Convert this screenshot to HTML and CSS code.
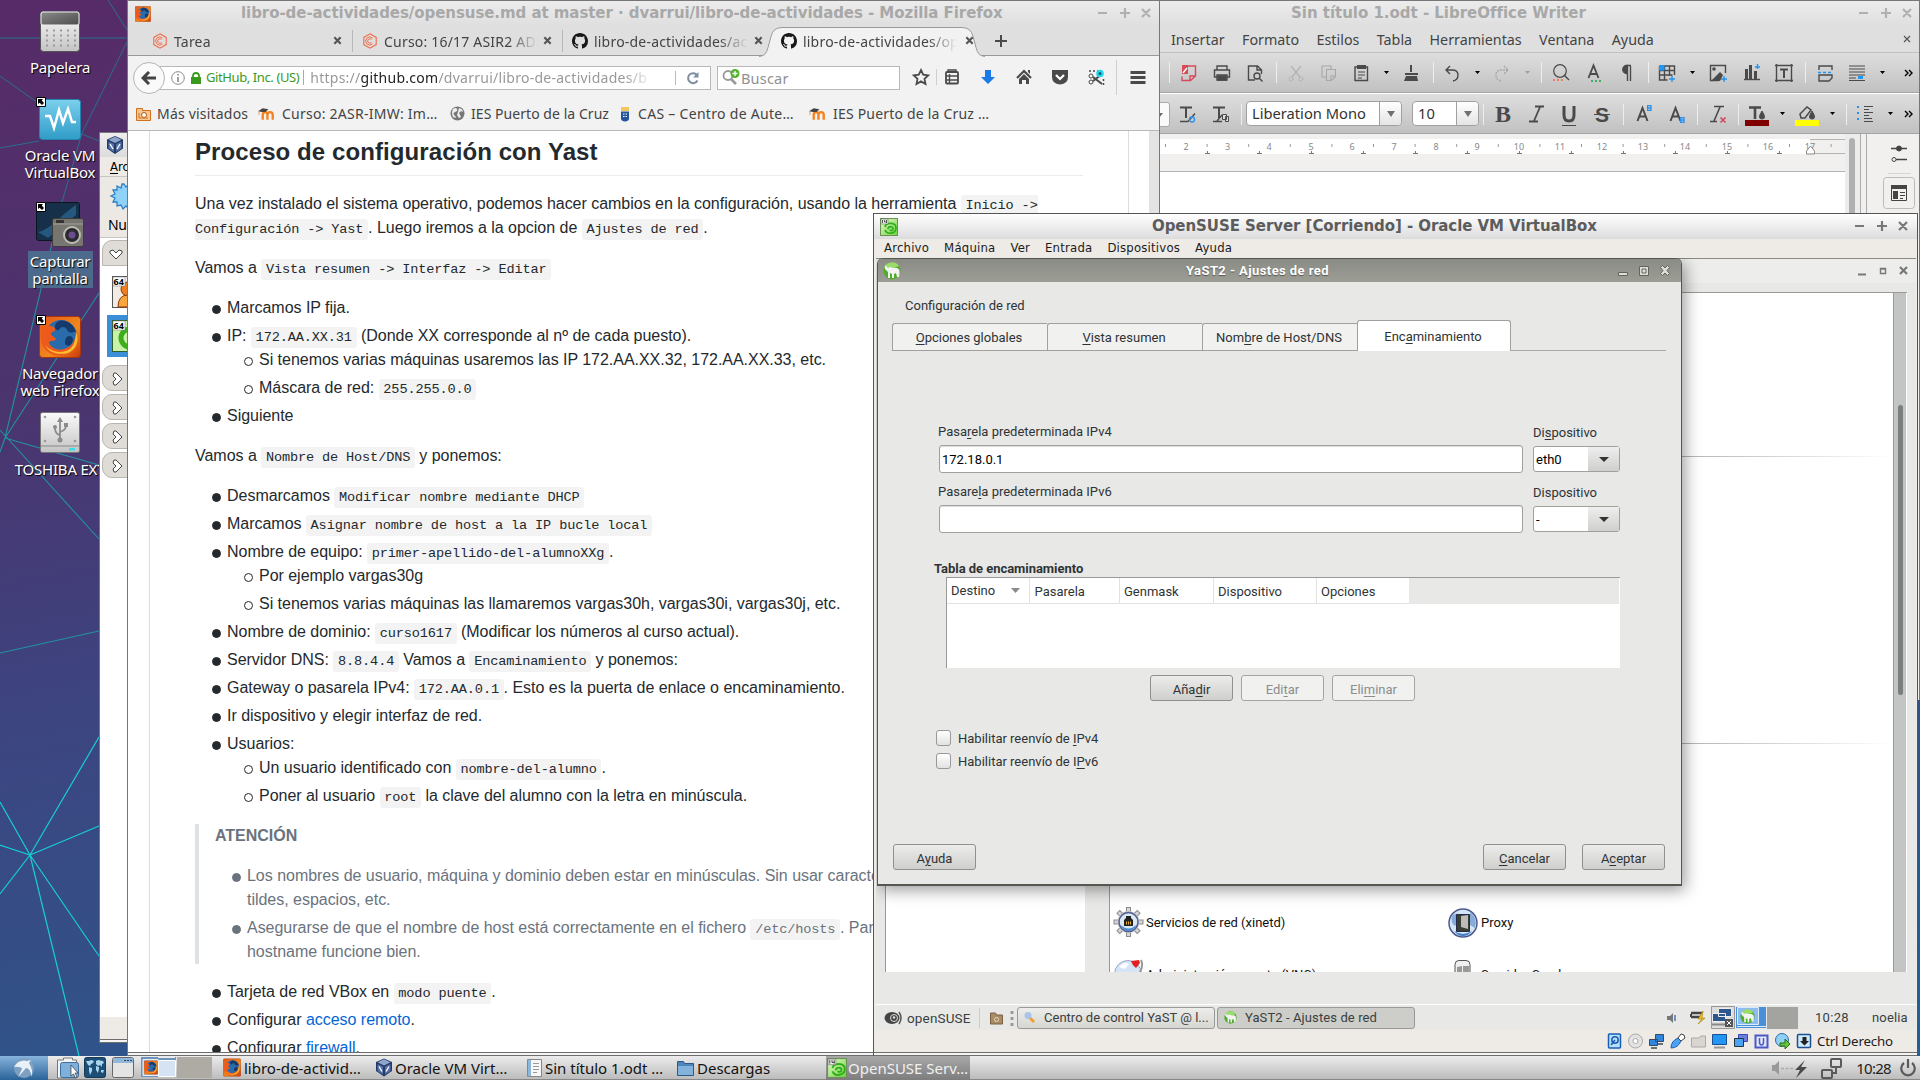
FILE: index.html
```html
<!DOCTYPE html>
<html lang="es">
<head>
<meta charset="utf-8">
<title>Escritorio</title>
<link rel="stylesheet" href="styles.css">
</head>
<body>
<svg class="defs" width="0" height="0">
  <defs>
    <linearGradient id="g-metal" x1="0" y1="0" x2="0" y2="1"><stop offset="0" stop-color="#fafafa"/><stop offset="1" stop-color="#c4c4c4"/></linearGradient>
    <linearGradient id="g-dark" x1="0" y1="0" x2="1" y2="1"><stop offset="0" stop-color="#8a8a8a"/><stop offset="1" stop-color="#4c4c4c"/></linearGradient>
    <linearGradient id="g-cyan" x1="0" y1="0" x2="0" y2="1"><stop offset="0" stop-color="#7cd0ec"/><stop offset="1" stop-color="#2f9cc8"/></linearGradient>
    <linearGradient id="g-fire" x1="0" y1="0" x2="1" y2="1"><stop offset="0" stop-color="#e2571a"/><stop offset=".6" stop-color="#f08a1c"/><stop offset="1" stop-color="#c8380c"/></linearGradient>
    <linearGradient id="g-green" x1="0" y1="0" x2="1" y2="1"><stop offset="0" stop-color="#e6fbd0"/><stop offset="1" stop-color="#6fd23c"/></linearGradient>
  </defs>
  <symbol id="i-firefox" viewBox="0 0 42 42">
    <rect x=".5" y=".5" width="41" height="41" rx="3" fill="url(#g-fire)" stroke="#a83410"/>
    <circle cx="22" cy="20" r="16" fill="#2a6cab"/>
    <path d="M20 5c8-2 15 4 17 11-3-1-4 2-7 0s-2-5-6-5-3 4-6 3-3-7 2-9zM30 20c4 0 5 3 3 7s-7 3-7 0 1-7 4-7z" fill="#173a6d"/>
    <path d="M3 10c2 2 3 1 5 0 5-1 9 2 8 4s-4 2-4 4 4 3 5 5c-2 3-5 1-7 3 1 6 9 9 15 7 8-2 12-9 12-17 5 9 1 20-11 23S3 35 2 24c-.5-6 0-10 1-14z" fill="#ee5a1c"/>
    <path d="M37 16c4 8 0 18-8 21-8 2-18 1-23-8 6 7 14 8 21 6s10-10 10-19z" fill="#fbc02d"/>
  </symbol>
  <symbol id="i-github" viewBox="0 0 16 16"><path fill="#191717" d="M8 0C3.58 0 0 3.58 0 8c0 3.54 2.29 6.53 5.47 7.59.4.07.55-.17.55-.38 0-.19-.01-.82-.01-1.49-2.01.37-2.53-.49-2.69-.94-.09-.23-.48-.94-.82-1.13-.28-.15-.68-.52-.01-.53.63-.01 1.08.58 1.23.82.72 1.21 1.87.87 2.33.66.07-.52.28-.87.51-1.07-1.78-.2-3.64-.89-3.64-3.95 0-.87.31-1.59.82-2.15-.08-.2-.36-1.02.08-2.12 0 0 .67-.21 2.2.82.64-.18 1.32-.27 2-.27s1.36.09 2 .27c1.53-1.04 2.2-.82 2.2-.82.44 1.1.16 1.92.08 2.12.51.56.82 1.27.82 2.15 0 3.07-1.87 3.75-3.65 3.95.29.25.54.73.54 1.48 0 1.07-.01 1.93-.01 2.2 0 .21.15.46.55.38A8.01 8.01 0 0 0 16 8c0-4.42-3.58-8-8-8z"/></symbol>
  <symbol id="i-campus" viewBox="0 0 16 16"><path d="M8 .8l6.2 3.6v7.2L8 15.200l-6.200-3.600V4.400z" fill="none" stroke="#ef6c4a" stroke-width="1.100"/><path d="M10.600 5.200a4 4 0 1 0 0 5.600M9.500 6.500a2.200 2.200 0 1 0 0 3" fill="none" stroke="#ef6c4a"/></symbol>
  <symbol id="i-moodle" viewBox="0 0 18 14"><path d="M3.500 13V8q0-3 2.500-3t2.500 3v5M8.500 8q0-3 2.800-3t2.800 3v5" transform="translate(1.500 0)" fill="none" stroke="#f58220" stroke-width="2.500"/><path d="M0 4l5-3 6 1-3 3H4z" fill="#444"/><path d="M1 4v4" stroke="#d9a36a"/></symbol>
  <symbol id="i-close" viewBox="0 0 10 10"><path d="M1.500 1.500l7 7M8.500 1.500l-7 7" stroke="#555" stroke-width="2.400"/></symbol>
  <symbol id="i-vbox" viewBox="0 0 16 18"><path d="M8 0l8 3.500v9L8 18l-8-5.500v-9z" fill="#243b68"/><path d="M8 .8l6.500 2.900L8 7 1.500 3.700z" fill="#8fa5cb"/><path d="M1.500 5.500L7 8v8L1.500 12.500zM14.500 5.500L9 8v8l5.500-3.500z" fill="#5672a8"/><path d="M3 8l3 5M13 8l-3 5" stroke="#fff" stroke-width="1.300"/></symbol>
  <symbol id="i-suse" viewBox="0 0 18 18"><rect x=".5" y=".5" width="17" height="17" fill="url(#g-green)" stroke="#6d8f58"/><path d="M5 9c1-5 11-5 11 1 0 6-9 7-11 2M8 11c0-3 5-3 5-.5s-3 2.500-3 1" fill="none" stroke="#2fae1c" stroke-width="1.700"/><path d="M1 1h7v5H1z" fill="#eee" stroke="#777" stroke-width=".6"/><path d="M2.500 2v3M4.500 2v2h2M6.500 2v3" stroke="#333" stroke-width=".8" fill="none"/></symbol>
  <symbol id="i-gnu" viewBox="0 0 18 18"><circle cx="9" cy="9" r="8.500" fill="#4fae28"/><path d="M1 6a8.500 8.500 0 0 1 15-2L9 7z" fill="#9bdc6c"/><path d="M2 3l3 3 2-1 3 1h4c3 1 3 4 2 9h-2l-1-4-2 1v4H9v-4l-2-1v5H5v-6L2 7z" fill="#f3f3f3"/></symbol>
  <symbol id="i-shortcut" viewBox="0 0 10 10"><path d="M.5.5h9v9h-9z" fill="#fff" stroke="#000"/><path d="M2 2h5L5.700 3.500 8 6 6 8 3.600 5.700 2 7z"/></symbol>
  <symbol id="i-geardoor" viewBox="0 0 32 32"><g stroke="#8c8c8c" stroke-width="5"><path d="M15.500 0v30M.5 15h30M5 4.500l21 21M26 4.500l-21 21"/></g><g stroke="#d6d6d6" stroke-width="3"><path d="M15.500 1v28M1.500 15h28M5.700 5.200l19.600 19.600M25.300 5.200L5.700 24.800"/></g><circle cx="15.500" cy="15" r="11" fill="#c9c9c9"/><circle cx="15.500" cy="15" r="9.500" fill="#dbe9f7" stroke="#4f5d92" stroke-width="1.500"/><path d="M7.500 18q8 7 16 0-3 6-8 6t-8-6z" fill="#4d8bd0"/></symbol>
</svg>

<main class="desktop">
  <svg class="wallpaper" viewBox="0 0 128 1056" width="128" height="1056">
    <g fill="none" stroke="#2b6f8c" stroke-width="1"><path d="M0 38H127M108 0l19 30M127 42L82 133 62 202M0 76l41 29M0 148l39-7M82 134l17 7"/></g>
    <g fill="none" stroke="#22929f" stroke-width="1.100"><path d="M99 293L5 438 62 202M5 438l94 27M0 430l99 109M5 438l-5 14M0 653l99-22"/></g>
    <g fill="none" stroke="#15cfd8" stroke-width="1.200"><path d="M30 855L99 737M30 855l69-29M30 855l69 101M30 855l49 201M30 855L0 802M30 855L0 845M30 855L0 894"/></g>
  </svg>

  <nav class="launchers">
    <div class="launcher l1">
      <svg width="48" height="50"><rect x="4.500" y="2.500" width="39" height="40" rx="3" fill="url(#g-metal)" stroke="#555"/><rect x="5" y="3" width="38" height="13" rx="2" fill="url(#g-dark)" stroke="#eee"/><g stroke="#999" stroke-width="2" stroke-dasharray="2 5"><path d="M10 21.500h30M10 26.500h30M10 31.500h30M10 36.500h30"/></g></svg>
      <span>Papelera</span>
    </div>
    <div class="launcher l2">
      <svg width="48" height="50"><rect x="3.500" y="2.500" width="41" height="40" rx="3" fill="url(#g-cyan)" stroke="#2484ae"/><path d="M9 19h5l4 12 5-18 4 13 5-14 4 13h4" fill="none" stroke="#fff" stroke-width="2.500"/><use href="#i-shortcut" width="10" height="10"/></svg>
      <span>Oracle VM</span><span>VirtualBox</span>
    </div>
    <div class="launcher l3">
      <svg width="48" height="50"><rect x=".5" y=".5" width="43" height="38" rx="2" fill="#16304a" stroke="#0b1622"/><path d="M2 30C14 28 26 12 40 3v10L12 36z" fill="#24587f"/><rect x="16.500" y="16.500" width="31" height="28" rx="2" fill="#77756f" stroke="#3c3b38"/><path d="M17 22h30" stroke="#a5a39c"/><circle cx="36" cy="33" r="9" fill="#bdbbb4"/><circle cx="36" cy="33" r="7" fill="#2a2a2e"/><circle cx="36" cy="33" r="3.500" fill="#6b4c8e"/><rect x="20" y="18" width="8" height="3" fill="#333"/><use href="#i-shortcut" width="10" height="10"/></svg>
      <div class="picked"><span>Capturar</span><span>pantalla</span></div>
    </div>
    <div class="launcher l4">
      <svg width="48" height="50"><use href="#i-firefox" x="3" y="1" width="42" height="42"/><use href="#i-shortcut" width="10" height="10"/></svg>
      <span>Navegador</span><span>web Firefox</span>
    </div>
    <div class="launcher l5">
      <svg width="48" height="50"><rect x="4.500" y="1.500" width="39" height="40" rx="2" fill="url(#g-metal)" stroke="#777"/><path d="M5 35h38" stroke="#888"/><rect x="33" y="37" width="6" height="2.500" fill="#38e0ea"/><g fill="none" stroke="#8b8b8b" stroke-width="1.800"><path d="M24 9v20M24 24q-5-1-5-7M24 21q6-2 6-6"/></g><g fill="#8b8b8b"><path d="M24 6l3 5h-6z"/><circle cx="24" cy="29" r="2.500"/><circle cx="19" cy="16" r="2"/><path d="M28 12h4v4h-4z"/></g><g fill="#999"><circle cx="9" cy="6" r="1.300"/><circle cx="39" cy="6" r="1.300"/><circle cx="9" cy="30" r="1.300"/><circle cx="39" cy="30" r="1.300"/></g></svg>
      <span>TOSHIBA EXT</span>
    </div>
  </nav>

  <section class="win manager">
    <div class="mg-title"><svg width="16" height="18"><use href="#i-vbox" width="16" height="18"/></svg></div>
    <div class="mg-menu"><u>A</u>rchivo</div>
    <div class="mg-tool">
      <svg width="32" height="32"><path d="M16 2l2 3 3-3 1 4 4-2v4l4 0-2 4 4 2-4 2 3 4h-4l0 4-4-1-2 4-3-3-3 3-2-4-4 1v-4H5l2-4-4-2 4-2-2-4h4V4l4 2 1-4z" fill="#8fd3fa" stroke="#2f7fc4" stroke-width="1.300"/></svg>
      <span>Nueva</span>
    </div>
    <div class="mg-list">
      <div class="mg-head open"><svg width="16" height="12"><path d="M2 3l3-1 3 3 3-3 3 1v2L8 11 2 5z" fill="#fff" stroke="#444"/></svg></div>
      <div class="mg-vm"><svg width="32" height="32"><rect x=".5" y=".5" width="31" height="31" fill="#f2ece4" stroke="#555"/><circle cx="16" cy="13" r="7" fill="#ef7d22" stroke="#8d3b06"/><path d="M6 31q0-12 10-12t10 12z" fill="#f9a63f" stroke="#8d3b06"/><rect x="1" y="1" width="12" height="9" fill="#fff" stroke="#777" stroke-width=".5"/><text x="1.500" y="9" class="tag64">64</text></svg></div>
      <div class="mg-vm on"><svg width="32" height="32"><rect x=".5" y=".5" width="31" height="31" fill="#c9f2a8" stroke="#2b5f2b"/><circle cx="18" cy="18" r="9" fill="none" stroke="#3fae1c" stroke-width="5"/><rect x="1" y="1" width="12" height="9" fill="#fff" stroke="#777" stroke-width=".5"/><text x="1.500" y="9" class="tag64">64</text></svg></div>
      <div class="mg-head"><svg width="12" height="16"><path d="M3 2h2l6 6-6 6H3l-1-3 3-3-3-3z" fill="#fff" stroke="#444"/></svg></div>
      <div class="mg-head"><svg width="12" height="16"><path d="M3 2h2l6 6-6 6H3l-1-3 3-3-3-3z" fill="#fff" stroke="#444"/></svg></div>
      <div class="mg-head"><svg width="12" height="16"><path d="M3 2h2l6 6-6 6H3l-1-3 3-3-3-3z" fill="#fff" stroke="#444"/></svg></div>
      <div class="mg-head"><svg width="12" height="16"><path d="M3 2h2l6 6-6 6H3l-1-3 3-3-3-3z" fill="#fff" stroke="#444"/></svg></div>
    </div>
    <div class="mg-status"></div>
    <div class="frame-foot"></div>
  </section>

  <section class="win writer">
    <header class="lo-title">
      <span class="lo-name">Sin título 1.odt - LibreOffice Writer</span>
      <svg width="54" height="12"><path d="M0 6h9M22 6h10M27 1v10M44 2l8 8M52 2l-8 8" stroke="#b0b0b0" stroke-width="2.200"/></svg>
    </header>
    <nav class="lo-menu"><span>Insertar</span><span>Formato</span><span>Estilos</span><span>Tabla</span><span>Herramientas</span><span>Ventana</span><span>Ayuda</span>
      <svg width="8" height="8"><path d="M1 1l6 6M7 1L1 7" stroke="#555" stroke-width="1.200"/></svg></nav>
    <div class="lo-bar">
      <svg viewBox="1159 53 760 40" width="760" height="40" fill="none" stroke="#4a4a4a" stroke-width="1.400">
        <g stroke="#eee" stroke-width="1"><path d="M1169.500 62v21M1276.500 62v21M1433.500 62v21M1541.500 62v21M1648.500 62v21M1805.500 62v21"/></g>
        <g stroke="#d84a5a"><path d="M1188 66h7.500v10l-5 4.500H1182v-4M1195 76h-5v5"/><path d="M1182 65h6v9h-6z" fill="#d84a5a" stroke="none"/><path d="M1183 73l4-5" stroke="#fff"/></g>
        <path d="M1217 70v-4h10v4M1217 77h-2.500v-7h15v7h-2.500M1217 75h10v5h-10z"/><path d="M1218 76h8v4h-8z" fill="#4a4a4a"/>
        <path d="M1255 80h-6.500V66h9l4 4v4M1257 66v4h4"/><circle cx="1257" cy="76" r="3"/><path d="M1259 78l3.500 3.500"/>
        <g stroke="#a8a8a8" stroke-width="1.100"><path d="M1291 66l9 11M1301 66l-9 11"/><circle cx="1291" cy="79" r="2" stroke-dasharray="1 1"/><circle cx="1301" cy="79" r="2" stroke-dasharray="1 1"/><path d="M1326 77h-4V66h9v3M1326.500 69.500h9v7l-4 4h-5zM1335 76h-4v4"/></g>
        <path d="M1355 67h12.500v13.500H1355z"/><path d="M1357 65h9v4h-9z" fill="#4a4a4a" stroke="none"/><path d="M1358 72h7M1358 75h7M1358 78h4" stroke-width="1"/>
        <path d="M1384 71h5l-2.500 3zM1475 71h5l-2.500 3zM1690 71h5l-2.500 3zM1880 71h5l-2.500 3z" fill="#000" stroke="none"/><path d="M1525 71h5l-2.500 3z" fill="#a0a0a0" stroke="none"/>
        <path d="M1411 65v7M1405 74h13" stroke-width="2"/><path d="M1406 76h11l1 5h-14z" fill="#4a4a4a" stroke="none"/>
        <path d="M1450 66l-4 4 4 4M1446 70h6q6 0 6 5t-5 6"/>
        <path d="M1504 66l4 4-4 4M1508 70h-6q-6 0-6 5t5 6" stroke="#a8a8a8" stroke-dasharray="2 1"/>
        <circle cx="1560" cy="71" r="6.300" stroke-width="1.200"/><path d="M1564 75l5 5"/><path d="M1553 80h11" stroke="#ef7f5a" stroke-width="2" stroke-dasharray="2 2"/>
        <path d="M1588.500 78l5-12.500 5 12.500M1590.500 74h6" stroke-width="1.800"/><path d="M1591 81h11" stroke="#3fae68" stroke-width="2" stroke-dasharray="2 2"/>
        <path d="M1631 65.500h-4a3.500 3.500 0 0 0 0 8V66M1627.500 66v15M1630.500 66v15"/><path d="M1627 65.500a4 4 0 0 0 0 8z" fill="#4a4a4a"/>
        <path d="M1659.500 66h15v9M1659.500 66v14h8M1659.500 70.500h15M1659.500 75h13M1664.500 66v14M1669.500 66v10"/><path d="M1659 65h5.500v5.500h-5.500z" fill="#2196f3" stroke="none"/><path d="M1669 79h6M1672 76v6" stroke="#2196f3"/>
        <path d="M1725.500 73v-7.500h-15v15h8"/><path d="M1711 81l9-9 3 3-3 6z" fill="#4a4a4a" stroke="none"/><circle cx="1714" cy="69" r="1.800" fill="#4a4a4a" stroke="none"/><path d="M1721 79h6M1724 76v6" stroke="#2196f3"/>
        <path d="M1744 79.500h16"/><path d="M1746.500 69v10M1750.500 65v14M1755.500 71v8" stroke-width="3"/><path d="M1755 67h5M1757.500 64v5" stroke="#2196f3"/>
        <path d="M1776.500 64v18M1791.500 64v18M1775 65.500h18M1775 80.500h18"/><path d="M1780 69.500h8M1784 69v9" stroke-width="2"/>
        <path d="M1819 70v-4h13v4M1819 75h13v3l-3 3h-10z"/><path d="M1818 72.500h14" stroke="#2196f3" stroke-dasharray="3 2"/>
        <path d="M1849 66h16M1849 69h16M1849 72h16M1849 75h16M1849 78h7M1849 80.500h16" stroke-width="1.100"/><path d="M1858 76h5v3h-5z" fill="#2196f3" stroke="none"/>
        <path d="M1905 70l3 3-3 3M1909 70l3 3-3 3" stroke="#000"/>
      </svg>
    </div>
    <div class="lo-bar second">
      <svg viewBox="1159 94 87 39" width="87" height="39" fill="none" stroke="#4a4a4a">
        <path d="M1159 102.500h8q2.500 0 2.500 2.500v19q0 2.500-2.500 2.500h-8z" fill="#fafafa" stroke="#a9a9a9"/><path d="M1159 113h4l-4 5z" fill="#666" stroke="none"/>
        <path d="M1180 107.500h12M1186 107v11" stroke-width="2"/><path d="M1180 121.500h8l7-8" stroke-width="1.400"/><circle cx="1192" cy="119.500" r="2.500" stroke="#2b90e8" stroke-width="1.300"/>
        <path d="M1213 107.500h12M1219 107v11" stroke-width="2"/><path d="M1213 121.500h9M1217 121l5-6" stroke-width="1.400"/><path d="M1222.500 114.500h4v5h-4zM1225.500 116.500h3v5h-3z" fill="#ddd"/>
        <path d="M1241.500 104v21" stroke="#eee"/>
      </svg>
      <div class="combo font"><span>Liberation Mono</span><i><svg width="8" height="6"><path d="M0 0h8L4 6z" fill="#707070"/></svg></i></div>
      <div class="combo size"><span>10</span><i><svg width="8" height="6"><path d="M0 0h8L4 6z" fill="#707070"/></svg></i></div>
      <svg viewBox="1479 94 440 39" width="440" height="39" fill="none" stroke="#4a4a4a">
        <g stroke="#eee"><path d="M1483.500 104v21M1623.500 104v21M1697.500 104v21M1738.500 104v21M1846.500 104v21"/></g>
        <g fill="#4a4a4a" stroke="none"><text x="1495" y="122" class="fmt bold">B</text><text x="1595" y="122" class="fmt sans">S</text></g>
        <path d="M1535 106.500h9M1529 121.500h9M1540 107l-6 14" stroke-width="1.800"/>
        <path d="M1564 106v9q0 6 5 6t5-6v-9" stroke-width="3"/><path d="M1562 125.500h14M1594 114.500h16" stroke-width="1.200"/>
        <path d="M1637.500 121l5-13 5 13M1639.500 116.500h6M1670.500 121l5-13 5 13M1672.500 116.500h6" stroke-width="2"/>
        <g stroke="#2b90e8" stroke-width="1.300"><path d="M1647.600 105.600h3.400v4.800h-3.400zM1648 108h3M1680.600 117.600h3.400v4.800h-3.400zM1681 120h3"/></g>
        <path d="M1714 106.500h10M1710 121.500h7M1720 107l-6 14" stroke-width="1.600"/><path d="M1720.500 117.500l5 5M1725.500 117.500l-5 5" stroke="#d84a5a" stroke-width="1.700"/>
        <path d="M1749 107.500h12M1755 107v12" stroke-width="2.600"/><path d="M1762 111q5 8 0 8t0-8z" fill="#4a4a4a" stroke="#4a4a4a"/><path fill="#800000" stroke="none" d="M1745 120h24v6h-24z"/>
        <path d="M1800 114l7-7 4 3-6 8h-4z" stroke-width="1.500"/><path d="M1812 111q5 8 0 8t0-8z" fill="#4a4a4a"/><path fill="#ff0" stroke="none" d="M1795 120h24v6h-24z"/>
        <path d="M1780 112h5l-2.500 3zM1830 112h5l-2.500 3zM1888 112h5l-2.500 3z" fill="#000" stroke="none"/>
        <path d="M1858 106v16" stroke="#2b90e8" stroke-width="2" stroke-dasharray="2 4"/><path d="M1864 106.500h9M1864 109.500h5M1864 112.500h9M1864 115.500h5M1864 118.500h8M1864 121.500h9" stroke-width="1.200"/>
        <path d="M1905 111l3 3-3 3M1909 111l3 3-3 3" stroke="#000" stroke-width="1.400"/>
      </svg>
    </div>
    <div class="lo-main">
      <div class="lo-edit">
        <svg class="ruler" viewBox="1159 134 686 38" width="686" height="38">
          <defs><pattern id="half" x="1165" y="134" width="41.600" height="38" patternUnits="userSpaceOnUse"><path d="M0 10h1v3H0z" fill="#999"/></pattern>
          <pattern id="tabs" x="1205" y="134" width="52" height="38" patternUnits="userSpaceOnUse"><path d="M0 19.500h5M2.500 17v3" stroke="#777"/></pattern></defs>
          <path d="M1159 139h651v15h-651z" fill="#fff"/>
          <path d="M1159 139h686v15h-686z" fill="url(#half)"/>
          <path d="M1205 150h600v5h-600z" fill="url(#tabs)"/>
          <path d="M1810 139.500h35M1812 153.500h33M1159 171.500h686" stroke="#b4b4b4" fill="none"/>
          <g class="nums"><text x="1186" y="150">2</text><text x="1227.500" y="150">3</text><text x="1269" y="150">4</text><text x="1311" y="150">5</text><text x="1352" y="150">6</text><text x="1394" y="150">7</text><text x="1436" y="150">8</text><text x="1477" y="150">9</text><text x="1519" y="150">10</text><text x="1560" y="150">11</text><text x="1602" y="150">12</text><text x="1643" y="150">13</text><text x="1685" y="150">14</text><text x="1727" y="150">15</text><text x="1768" y="150">16</text><text x="1810" y="150">17</text></g>
          <path d="M1806.500 154v-3l4-5 4 5v3z" fill="#fff" stroke="#888"/>
        </svg>
        <div class="page"></div>
      </div>
      <div class="lo-scroll"><i></i></div>
      <div class="lo-side">
        <svg width="53" height="80" fill="none" stroke="#444"><path d="M24 14.500h16M29 25.500h11" stroke-width="1.300"/><circle cx="32" cy="14.500" r="2.500" fill="#444"/><circle cx="27" cy="25.500" r="2"/><path d="M21 39.500h23" stroke="#d5d5d5"/><rect x="16.500" y="43.500" width="31" height="31" rx="3" stroke="#bbb"/><path d="M24.500 52.500h15v14h-15z"/><path d="M24 51h16v4H24zM26 57h5v8h-5z" fill="#444" stroke="none"/><path d="M33 58.500h5M33 61.500h5M33 64.500h3"/></svg>
      </div>
    </div>
  </section>

  <section class="win firefox">
    <header class="ff-title">
      <svg width="16" height="16"><use href="#i-firefox" width="16" height="16"/></svg>
      <h1>libro-de-actividades/opensuse.md at master · dvarrui/libro-de-actividades - Mozilla Firefox</h1>
      <svg width="54" height="12"><path d="M0 6h9M22 6h10M27 1v10M44 2l8 8M52 2l-8 8" stroke="#b0b0b0" stroke-width="2.200"/></svg>
    </header>
    <div class="ff-tabs">
      <div class="tab first"><svg width="16" height="16"><use href="#i-campus" width="16" height="16"/></svg><span>Tarea</span><svg width="9" height="9"><use href="#i-close" width="9" height="9"/></svg></div>
      <div class="tab"><svg width="16" height="16"><use href="#i-campus" width="16" height="16"/></svg><span>Curso: 16/17 ASIR2 ADM</span><svg width="9" height="9"><use href="#i-close" width="9" height="9"/></svg></div>
      <div class="tab last"><svg width="16" height="16"><use href="#i-github" width="16" height="16"/></svg><span>libro-de-actividades/act</span><svg width="9" height="9"><use href="#i-close" width="9" height="9"/></svg></div>
      <div class="tab active"><svg class="shape" width="226" height="30" viewBox="0 0 226 30"><path d="M0 29.500q7 0 9-9l3-11q2-9 11-9h180q9 0 11 9l3 11q2 9 9 9" fill="#f2f2f2" stroke="#9a9a9a"/><path d="M2 30h222" stroke="#f2f2f2"/></svg><svg width="16" height="16"><use href="#i-github" width="16" height="16"/></svg><span>libro-de-actividades/ope</span><svg width="9" height="9"><use href="#i-close" width="9" height="9"/></svg></div>
      <svg class="plus" width="12" height="12"><path d="M0 6h12M6 0v12" stroke="#4a4a4a" stroke-width="2"/></svg>
    </div>
    <div class="ff-nav">
      <div class="back"><svg width="16" height="14"><path d="M15 7H3M8 1L2 7l6 6" fill="none" stroke="#444" stroke-width="3"/></svg></div>
      <div class="url">
        <svg width="14" height="14"><circle cx="7" cy="7" r="6.300" fill="none" stroke="#888"/><path d="M7 6v5M7 3v1.500" stroke="#777" stroke-width="1.400"/></svg>
        <svg class="lock" width="10" height="12"><path d="M2 6V4q0-3 3-3t3 3v2" fill="none" stroke="#3a9a1e" stroke-width="1.800"/><path d="M0 5h10v7H0z" fill="#3a9a1e"/></svg>
        <span class="owner">GitHub, Inc. (US)</span>
        <span class="addr">https://<b>github.com</b>/dvarrui/libro-de-actividades/b</span>
        <svg class="reload" width="14" height="14"><path d="M11.500 9.500A5 5 0 1 1 11 4" fill="none" stroke="#7f8fa0" stroke-width="2"/><path d="M12.500 1v5.500H7z" fill="#7f8fa0"/></svg>
      </div>
      <div class="search"><svg width="18" height="17"><circle cx="6" cy="6.500" r="4.500" fill="none" stroke="#999" stroke-width="1.800"/><path d="M9 10l5 5" stroke="#999" stroke-width="2.600"/><circle cx="13" cy="4.500" r="4.500" fill="#52b32a"/><path d="M10.500 4.500h5M13 2v5" stroke="#fff" stroke-width="1.300"/></svg><span>Buscar</span></div>
      <svg class="ff-icons" viewBox="910 60 248 36" width="248" height="36" fill="none" stroke="#4a4a4a">
        <path d="M921 70l2.200 4.700 5 .6-3.700 3.500 1 5.200-4.500-2.600-4.500 2.600 1-5.200-3.700-3.500 5-.6z" stroke-width="1.800"/>
        <path d="M936.500 69v16M1116.500 59v36" stroke="#cfcfcf"/>
        <rect x="946" y="72" width="12" height="11.500" rx="1" stroke-width="1.800"/><path d="M948 72v-2h8v2M946 76h12M946 80h12M949.500 74v9" stroke-width="1.400"/>
        <path d="M985 70h6v7h4l-7 7-7-7h4z" fill="#1a7be8" stroke="none"/>
        <path d="M1017 78l7-7 7 7" stroke-width="2.200"/><path d="M1019 79l5-5 5 5v5h-3v-4h-4v4h-3zM1028 70h2v4l-2-2z" fill="#4a4a4a" stroke="none"/>
        <path d="M1052 70h16v7q0 7-8 7.500-8-.5-8-7.500z" fill="#4a4a4a" stroke="none"/><path d="M1056 75l4 4 4-4" stroke="#fff" stroke-width="2.200"/>
        <path d="M1089 71h10M1103.500 79v6" stroke-dasharray="2 2" stroke-width="1.500"/><circle cx="1091" cy="76" r="2"/><circle cx="1091" cy="82" r="2"/><path d="M1093 77l9 7M1093 81l9-7" stroke-width="2"/><circle cx="1100" cy="73.500" r="3.800" fill="#24d7ea" stroke="none"/><circle cx="1100" cy="73.500" r="1.500" fill="#0c5b7a" stroke="none"/>
        <path d="M1130.500 72.500h15M1130.500 77.500h15M1130.500 82.500h15" stroke-width="2.800"/>
      </svg>
    </div>
    <div class="ff-marks">
      <span class="m1"><svg width="15" height="15"><path d="M.5 2.500h6v2h8v10H.5z" fill="#f6c795" stroke="#d2711b"/><circle cx="8" cy="9" r="2.500" fill="#fff" stroke="#b5580f"/><path d="M3 7v5h9" fill="none" stroke="#d2711b"/></svg>Más visitados</span>
      <span class="m2"><svg width="17" height="14"><use href="#i-moodle" width="17" height="14"/></svg>Curso: 2ASR-IMW: Im…</span>
      <span class="m3"><svg width="15" height="15"><circle cx="7.500" cy="7.500" r="7" fill="#777"/><path d="M3 3q3-2 4 0t-2 3 0 4-2 1q-2-4 0-8zM9 2q4 1 4 4l-2-1-2 2 2 4-2 1-2-3 1-3z" fill="#eee"/></svg>IES Puerto de la Cruz</span>
      <span class="m4"><svg width="12" height="16"><path d="M2 1h8v4H2z" fill="#efc75c"/><path d="M2 5.500h8v7q0 2.500-4 3-4-.5-4-3z" fill="#22559b"/><path d="M4 8h4M4 10.500h4" stroke="#fff" stroke-dasharray="1.500 1"/></svg>CAS – Centro de Aute…</span>
      <span class="m5"><svg width="17" height="14"><use href="#i-moodle" width="17" height="14"/></svg>IES Puerto de la Cruz …</span>
    </div>
    <div class="ff-view">
      <article class="markdown">
        <h2>Proceso de configuración con Yast</h2>
        <p>Una vez instalado el sistema operativo, podemos hacer cambios en la configuración, usando la herramienta <code>Inicio -&gt; Configuración -&gt; Yast</code>. Luego iremos a la opcion de <code>Ajustes de red</code>.</p>
        <p>Vamos a <code>Vista resumen -&gt; Interfaz -&gt; Editar</code></p>
        <ul>
          <li>Marcamos IP fija.</li>
          <li>IP: <code>172.AA.XX.31</code> (Donde XX corresponde al nº de cada puesto).
            <ul><li>Si tenemos varias máquinas usaremos las IP 172.AA.XX.32, 172.AA.XX.33, etc.</li><li>Máscara de red: <code>255.255.0.0</code></li></ul></li>
          <li>Siguiente</li>
        </ul>
        <p>Vamos a <code>Nombre de Host/DNS</code> y ponemos:</p>
        <ul>
          <li>Desmarcamos <code>Modificar nombre mediante DHCP</code></li>
          <li>Marcamos <code>Asignar nombre de host a la IP bucle local</code></li>
          <li>Nombre de equipo: <code>primer-apellido-del-alumnoXXg</code>.
            <ul><li>Por ejemplo vargas30g</li><li>Si tenemos varias máquinas las llamaremos vargas30h, vargas30i, vargas30j, etc.</li></ul></li>
          <li>Nombre de dominio: <code>curso1617</code> (Modificar los números al curso actual).</li>
          <li>Servidor DNS: <code>8.8.4.4</code> Vamos a <code>Encaminamiento</code> y ponemos:</li>
          <li>Gateway o pasarela IPv4: <code>172.AA.0.1</code>. Esto es la puerta de enlace o encaminamiento.</li>
          <li>Ir dispositivo y elegir interfaz de red.</li>
          <li>Usuarios:
            <ul><li>Un usuario identificado con <code>nombre-del-alumno</code>.</li><li>Poner al usuario <code>root</code> la clave del alumno con la letra en minúscula.</li></ul></li>
        </ul>
        <blockquote>
          <p><strong>ATENCIÓN</strong></p>
          <ul>
            <li>Los nombres de usuario, máquina y dominio deben estar en minúsculas. Sin usar caracteres,<br>tildes, espacios, etc.</li>
            <li>Asegurarse de que el nombre de host está correctamente en el fichero <code>/etc/hosts</code>. Para que<br>hostname funcione bien.</li>
          </ul>
        </blockquote>
        <ul>
          <li>Tarjeta de red VBox en <code>modo puente</code>.</li>
          <li>Configurar <a>acceso remoto</a>.</li>
          <li>Configurar <a>firewall</a>.</li>
        </ul>
      </article>
      <div class="ff-scroll"></div>
    </div>
    <div class="frame-foot"></div>
  </section>

  <section class="win vm">
    <header class="vm-title">
      <svg width="18" height="18"><use href="#i-suse" width="18" height="18"/></svg>
      <h1>OpenSUSE Server [Corriendo] - Oracle VM VirtualBox</h1>
      <svg width="54" height="12"><path d="M0 6h9M22 6h10M27 1v10M44 2l8 8M52 2l-8 8" stroke="#777" stroke-width="2.200"/></svg>
    </header>
    <nav class="vm-menu"><span>Archivo</span><span>Máquina</span><span>Ver</span><span>Entrada</span><span>Dispositivos</span><span>Ayuda</span></nav>
    <div class="guest">
      <div class="cc-title"><svg width="50" height="12" fill="none" stroke="#777a74"><path d="M0 9.500h8" stroke-width="2"/><path d="M22.500 3.500h5v5h-5zM22 4h6" stroke-width="1.400"/><path d="M42 2l7 7M49 2l-7 7" stroke-width="2.200"/></svg></div>
      <div class="cc-body">
        <div class="cc-left"></div>
        <div class="cc-right">
          <div class="cc-list">
            <hr class="r1"><hr class="r2">
            <div class="mods">
              <span><svg width="32" height="32"><use href="#i-geardoor" width="32" height="32"/><path d="M11 19v-6l2-2V9h5v2l2 2v6z" fill="#222"/><path d="M13.500 14.500v3M15.500 14.500v3M17.500 14.500v3" stroke="#e0b030"/></svg>Servicios de red (xinetd)</span>
              <span><svg width="32" height="32"><circle cx="15" cy="16" r="14" fill="#d5e5f5" stroke="#4a5a8e" stroke-width="1.500"/><path d="M4 9q6-5 7 1t-4 9q-5-3-3-10zM22 5q8 6 5 16l-5-3z" fill="#86abd8"/><path d="M6 24q9 6 18 0-4 5-9 5t-9-5z" fill="#3f7cc4"/><path d="M8.500 7.500h13v17h-13z" fill="#3a3f32" stroke="#222a52"/><path d="M13 9l7-1v14l-7-2z" fill="#bcbcbc"/></svg>Proxy</span>
              <span><svg width="32" height="32"><circle cx="15" cy="15" r="13.500" fill="#d5e5f5" stroke="#9aa5c4"/><path d="M6 8q6-6 10-3l-4 5z" fill="#fff"/><path d="M18 2l8-1 1 3-4 5q-4-3-5-7z" fill="#e02020"/><path d="M28 1q3 6-2 14" fill="none" stroke="#999" stroke-width="2"/></svg>Administración remota (VNC)</span>
              <span><svg width="32" height="32"><rect x="7" y="1.500" width="15" height="28" rx="4" fill="#f0f0f0" stroke="#555"/><path d="M9 8l5-1v6H9zM15 7h6v6h-6z" fill="#999"/></svg>Servidor Samba</span>
            </div>
          </div>
          <div class="cc-scroll"><i></i></div>
        </div>
      </div>
      <div class="panel">
        <svg width="18" height="14"><ellipse cx="8" cy="7" rx="7.500" ry="6" fill="#444"/><circle cx="10" cy="7" r="3.500" fill="none" stroke="#ddd"/><circle cx="10" cy="6.500" r="1.300" fill="#ddd"/><path d="M15 1q4 6 0 12" fill="none" stroke="#555" stroke-width="1.500"/></svg>
        <span class="p-start">openSUSE</span>
        <svg class="p-folder" width="36" height="22"><path d="M.5 1v20" stroke="#ccc"/><path d="M11.500 6h5l1 2h6v9h-12z" fill="#a98b66" stroke="#7b6140"/><circle cx="17.500" cy="12.500" r="2" fill="none" stroke="#e6d6bd"/><path d="M33 4v3M33 10v3M33 16v3" stroke="#9b9b9b" stroke-width="3"/></svg>
        <div class="p-task"><svg width="12" height="14"><path d="M4 5l6 6" stroke="#f0a030" stroke-width="3"/><circle cx="4" cy="4.500" r="3.500" fill="#a9c4e8"/></svg><span>Centro de control YaST @ l...</span></div>
        <div class="p-task pressed"><svg width="13" height="13"><use href="#i-gnu" width="13" height="13"/></svg><span>YaST2 - Ajustes de red</span></div>
        <svg class="p-tray" viewBox="1665 1006 135 24" width="135" height="24">
          <path d="M1667 1016h3l3-3v10l-3-3h-3z" fill="#777"/><path d="M1675 1015v6" stroke="#6f94c4" stroke-width="2"/>
          <path d="M1691 1013h11M1691 1017h10" stroke="#444" stroke-width="2.500"/><path d="M1691 1014v3" stroke="#444" stroke-width="2"/><path d="M1703 1011l-5 8h4l-4 5 7-6h-3z" fill="#f0c020" stroke="#a07800" stroke-width=".6"/>
          <path d="M1711.500 1006.500h23v22h-23z" fill="#ddd" stroke="#999"/><g fill="#2d568f" stroke="#eee"><path d="M1718.500 1008.500h13v8h-13zM1712.500 1013.500h13v8h-13z"/></g><path d="M1712 1024.500h14" stroke="#888" stroke-width="2"/><path d="M1725 1019h8v8h-8z" fill="#555"/><path d="M1727 1021l4 4M1731 1021l-4 4" stroke="#fff"/>
          <path d="M1736 1007h30v21h-30z" fill="#4a90d9"/><path d="M1737.500 1007.500h21v17h-21z" fill="#8cbcf0" stroke="#dcebfa"/><use href="#i-gnu" x="1740" y="1009" width="15" height="15"/><path d="M1737 1026.500h29" stroke="#dcebfa"/>
          <path d="M1767 1007h31v22h-31z" fill="#a3a3a0"/>
        </svg>
        <span class="p-clock">10:28</span><span class="p-user">noelia</span>
      </div>

      <section class="dialog">
        <header class="dg-title"><svg width="18" height="18"><use href="#i-gnu" width="18" height="18"/></svg><h2>YaST2 - Ajustes de red</h2>
          <svg width="54" height="14"><g fill="#deded9" stroke="#62645d"><path d="M.5 8.500h9v3h-9z"/><path d="M21.500 2.500h9v9h-9zM24 5h4v4h-4z"/><path d="M42.500 3.500l2-2 2.500 2.500 2.500-2.500 2 2-2.500 3 2.500 3-2 2-2.500-2.500-2.500 2.500-2-2 2.500-3z"/></g></svg></header>
        <div class="dg-head">Configuración de red</div>
        <div class="dg-tabs"><span><u>O</u>pciones globales</span><span><u>V</u>ista resumen</span><span>Nom<u>b</u>re de Host/DNS</span><span class="cur">Enc<u>a</u>minamiento</span></div>
        <div class="dg-form">
          <label>Pasa<u>r</u>ela predeterminada IPv4</label><label class="dev">Di<u>s</u>positivo</label>
          <div class="field">172.18.0.1</div><div class="select"><span>eth0</span><i><svg width="10" height="5"><path d="M0 0h10L5 5z" fill="#333"/></svg></i></div>
          <label class="low">Pasare<u>l</u>a predeterminada IPv6</label><label class="low dev">Dispositivo</label>
          <div class="field"></div><div class="select"><span>-</span><i><svg width="10" height="5"><path d="M0 0h10L5 5z" fill="#333"/></svg></i></div>
        </div>
        <h3>Tabla de encaminamiento</h3>
        <div class="dg-table"><div class="cols"><span class="c1">Destino<svg width="9" height="6"><path d="M0 0h9L4.500 5z" fill="#888b88"/></svg></span><span class="c2">Pasarela</span><span class="c3">Genmask</span><span class="c4">Dispositivo</span><span class="c5">Opciones</span></div></div>
        <div class="dg-actions"><button>Aña<u>d</u>ir</button><button disabled>Edi<u>t</u>ar</button><button disabled>Eli<u>m</u>inar</button></div>
        <div class="dg-checks"><label><i></i><span>Habilitar reenvío de <u>I</u>Pv4</span></label><label><i></i><span>Habilitar reenvío de I<u>P</u>v6</span></label></div>
        <div class="dg-foot"><button>A<u>y</u>uda</button><button class="cancel"><u>C</u>ancelar</button><button>A<u>c</u>eptar</button></div>
      </section>
    </div>
    <div class="vm-status">
      <svg viewBox="1606 1033 206 17" width="206" height="17" fill="none">
        <rect x="1608.500" y="1034" width="12" height="14" rx="1" fill="#b9e0fb" stroke="#1a5fb4" stroke-width="1.500"/><circle cx="1615" cy="1040" r="3.200" stroke="#1a5fb4" stroke-width="1.500"/><path d="M1615 1040l-4 5" stroke="#1a5fb4" stroke-width="1.500"/>
        <circle cx="1635.500" cy="1041" r="7" fill="#e2e2e2" stroke="#aaa"/><circle cx="1635.500" cy="1041" r="2.500" fill="#fff" stroke="#aaa"/>
        <g fill="#2f86e0" stroke="#3b4a5a"><path d="M1655.500 1034.500h8v7h-8zM1649.500 1039.500h8v6h-8z"/></g><path d="M1651 1048h6M1658 1044h5" stroke="#3b4a5a" stroke-width="1.500"/>
        <path d="M1671 1048q0-7 7-10l3 3q-3 7-10 7z" fill="#4aa3f2" stroke="#1a5fb4"/><path d="M1678 1038l3-4q4 0 4 4l-4 3z" fill="#fff" stroke="#444"/>
        <path d="M1691.500 1047v-9h8l1-2h5v11z" fill="#d9d6d2" stroke="#aaa"/>
        <path d="M1712.500 1034.500h14v10h-14z" fill="#2196f3" stroke="#1a4f94"/><path d="M1714 1047.500h11" stroke="#999" stroke-width="2"/>
        <path d="M1738.500 1034.500h9v7h-9z" fill="#6f7fe0" stroke="#3a4ab0"/><path d="M1734.500 1038.500h9v8h-9z" fill="#4aa3f2" stroke="#234"/>
        <rect x="1755.500" y="1035.500" width="12" height="12" fill="#e4e7fb" stroke="#4a5ac4" stroke-width="2"/><path d="M1759.500 1038v4q0 3 2 3t2-3v-4" stroke="#4a5ac4" stroke-width="1.500"/>
        <circle cx="1782" cy="1040" r="6.500" fill="#8fd0f5" stroke="#2a70a8"/><path d="M1780 1043h5v-4l5 5-5 5v-3h-5z" fill="#63c63c" stroke="#2b6e14"/>
        <rect x="1797.500" y="1034.500" width="13" height="13" rx="1" fill="#cfe9fb" stroke="#1a4f94" stroke-width="1.500"/><path d="M1802.500 1037h4v4h2.500l-4.500 4.500-4.500-4.500h2.500z" fill="#222"/>
      </svg>
      <span>Ctrl Derecho</span>
    </div>
    <div class="frame-foot"></div>
  </section>

  <footer class="taskbar">
    <div class="menu-btn"><svg width="24" height="22"><circle cx="12" cy="11" r="10" fill="#7f9fc0"/><path d="M2 10Q7 2 15 4l4-1-2 3q4 6 3 14-2-9-6-9-4 5-8 9 4-7 4-9-5-2-8-1z" fill="#e8f0f8"/></svg></div>
    <svg class="quick" viewBox="55 1058 160 22" width="160" height="22">
      <path d="M57.500 1061h6v-2h9v2h4v18h-19z" fill="#f4f4f4" stroke="#777"/><rect x="60.500" y="1063.500" width="18" height="15" rx="2" fill="#7fb0da" stroke="#3d6d9c"/><path d="M71 1066v11l2.500-2 2 4 1.500-1-2-4h3z" fill="#fff" stroke="#333" stroke-width=".7"/>
      <rect x="84.500" y="1058.500" width="21" height="20" rx="2" fill="#1d4f76" stroke="#173a55"/><path d="M86 1062h3l2-1 3 1-1 2-2 1-1 2-2-1zM89 1068l3 1 0 3-2 4-1-4zM96 1062l2-1 5 1 1 2-2 1 0 3-2-2-2 1-2-2zM96 1067l3 1 0 2-1 4-2-3zM101 1071l3 0-1 3-2-1z" fill="#a9d4ee"/>
      <rect x="112.500" y="1058.500" width="21" height="20" rx="2" fill="#e4e4e4" stroke="#666"/><path d="M113 1059h20v5h-20z" fill="#8fb8dc"/><path d="M124 1061.500h8" stroke="#345" stroke-dasharray="2 1"/>
      <path d="M141 1058h35v20h-35z" fill="#6d93bb"/><path d="M143 1060.500h15v16h-15zM158 1058.500h17" fill="#b8cee6" stroke="#e6eef7"/><use href="#i-firefox" x="144" y="1061" width="14" height="15"/><path d="M158.500 1061.500h17v16h-17z" fill="#d5e3f3" stroke="#fff"/>
      <path d="M177 1058h35v21h-35z" fill="#aeaaa4"/>
    </svg>
    <div class="task t1"><svg width="18" height="19"><use href="#i-firefox" width="18" height="19"/></svg><span>libro-de-activid…</span></div>
    <div class="task t2"><svg width="16" height="19"><use href="#i-vbox" width="16" height="19"/></svg><span>Oracle VM Virt…</span></div>
    <div class="task t3"><svg width="15" height="18"><path d="M.5.500h14v17H.5z" fill="#f6f6f6" stroke="#888"/><path d="M1 1h3v16H1z" fill="#8bb8da"/><path d="M6 4.500h6M6 7.500h6M6 10.500h6M6 13.500h4" stroke="#999"/></svg><span>Sin título 1.odt …</span></div>
    <div class="task t4"><svg width="17" height="16"><path d="M.5 1.500h6l1 2h9v12H.5z" fill="#4f86b9" stroke="#2a5a8a"/><path d="M1 6h15v9H1z" fill="#83b3dc"/></svg><span>Descargas</span></div>
    <div class="task t5"><svg width="22" height="20"><use href="#i-suse" width="22" height="20"/></svg><span>OpenSUSE Serv…</span></div>
    <svg class="tray" viewBox="1770 1056 76 24" width="76" height="24" fill="none">
      <path d="M1772 1065h3l4-4v14l-4-4h-3z" fill="#999"/><path d="M1781 1068.500h12" stroke="#aaa" stroke-width="1.500" stroke-dasharray="3 1.500"/>
      <path d="M1805 1060l-10 10h5l-4 8 11-11h-6z" fill="#4a4a4a"/>
      <g stroke="#5a5a5a" stroke-width="2"><rect x="1831" y="1059" width="10" height="8" rx="1"/><rect x="1822" y="1070" width="10" height="8" rx="1"/><path d="M1836 1067v6h-4"/></g>
    </svg>
    <span class="clock">10:28</span>
    <svg width="18" height="20"><path d="M5 5a6.800 6.800 0 1 0 8 0M9 1v9" fill="none" stroke="#5a5a5a" stroke-width="2.200"/></svg>
  </footer>
</main>
</body>
</html>
```
FILE: styles.css
```css
* { box-sizing: border-box; }
body { margin: 0; font-family: "Noto Sans", sans-serif; }
h1, h2, h3, p, ul { margin: 0; }
svg { display: block; flex: none; }
.defs { position: absolute; }
u { text-underline-offset: 2px; text-decoration-thickness: 1px; }

.desktop { position: relative; width: 1920px; height: 1080px; overflow: hidden; background: linear-gradient(170deg, #572b67 0%, #4a356f 30%, #3d4480 50%, #335086 70%, #235e97 92%); }
.wallpaper { position: absolute; left: 0; top: 0; }
.win { position: absolute; display: flex; flex-direction: column; overflow: hidden; }
.frame-foot { flex: none; height: 4px; border: solid #6e6e6e; border-width: 1px 0; background: #f4f4f4; }

/* desktop launchers */
.launchers { position: relative; width: 120px; padding-top: 9px; color: #fff; font-size: 15px; line-height: 17px; letter-spacing: -.2px; text-shadow: 1px 1px 1px #000; }
.launcher { display: flex; flex-direction: column; align-items: center; white-space: nowrap; }
.l2, .l3 { margin-top: 21px; }
.l4 { margin-top: 27px; }
.l5 { margin-top: 12px; }
.picked { display: flex; flex-direction: column; align-items: center; width: 65px; margin-top: -1px; padding: 2px 0 1px; background: #4b6a8c; }

/* VirtualBox manager, mostly covered */
.manager { left: 99px; top: 132px; width: 200px; height: 911px; border: 1px solid #777; border-bottom: 0; background: #fff; }
.mg-title { height: 24px; padding: 3px 7px; background: linear-gradient(#eee, #dcdcdc); }
.mg-menu { height: 19px; padding-left: 10px; background: #eeebe7; font: 13px/20px "DejaVu Sans Condensed", sans-serif; }
.mg-tool { height: 62px; border: solid #c9c5c0; border-width: 1px 0; padding: 5px 8px; background: #ece9e5; font-size: 14px; line-height: 22px; letter-spacing: -.3px; }
.mg-list { flex: 1; padding: 2px; background: #fff; }
.mg-head { height: 26px; margin-bottom: 3px; padding: 5px 8px; border: 1px solid #b9b5b0; border-radius: 10px; background: #dfdbd6; }
.mg-head.open { margin: 0 0 5px; padding: 7px 5px; border-radius: 10px 10px 0 0; }
.mg-vm { height: 42px; margin-left: 5px; padding: 5px; }
.mg-vm.on { margin: 2px 0 8px 5px; background: #3a8fd8; }
.tag64 { font: bold 9px "Noto Sans", sans-serif; }
.mg-status { height: 22px; background: #eeebe7; }

/* LibreOffice Writer */
.writer { left: 1159px; top: 0; width: 761px; height: 700px; border-top: 1px solid #777; border-right: 1px solid #777; background: #e2e2e2; color: #444; }
.lo-title { display: flex; align-items: center; height: 25px; padding: 0 6px 0 132px; background: linear-gradient(#ececec, #dfdfdf); color: #a8a8a8; font: bold 15px/22px "DejaVu Sans", sans-serif; }
.lo-title svg, .ff-title > svg:last-child { margin-top: -2px; }
.lo-name { margin-right: auto; letter-spacing: -.02px; margin-top: -2px; }
.lo-menu { display: flex; align-items: center; height: 27px; padding: 0 8px 0 12px; border-bottom: 1px solid #c2c2c2; background: #dfdfdf; font-size: 14.300px; }
.lo-menu span { margin-right: 17.400px; line-height: 27px; white-space: nowrap; }
.lo-menu svg { margin-left: auto; }
.lo-bar { display: flex; align-items: center; height: 40px; border-bottom: 1px solid #a5a5a5; background: linear-gradient(#dedede, #c1c1c1); }
.lo-bar.second { height: 41px; border-top: 1px solid #fff; }
.combo { display: flex; height: 25px; border: 1px solid #a0a0a0; border-radius: 4px; background: #fff; font-size: 14.700px; line-height: 23px; color: #333; }
.combo span { flex: 1; padding-left: 5px; white-space: nowrap; }
.combo i { display: flex; align-items: center; justify-content: center; width: 22px; border-left: 1px solid #a0a0a0; background: linear-gradient(#fff, #e4e4e4); border-radius: 0 4px 4px 0; }
.combo.font { width: 156px; margin-right: 10px; }
.combo.size { width: 67px; }
.fmt { font-weight: bold; }
.fmt.bold { font-family: "Liberation Serif", serif; font-size: 24px; }
.fmt.sans { font-family: "Liberation Sans", sans-serif; font-size: 21px; }
.lo-main { display: flex; flex: 1; }
.lo-edit { width: 686px; background: #f1f0ee; }
.nums { font: 9px "Noto Sans", sans-serif; fill: #888; text-anchor: middle; }
.page { height: 400px; background: #fff; }
.lo-scroll { width: 16px; padding: 4px 5px 0 4px; background: #ececec; }
.lo-scroll i { display: block; height: 300px; border-radius: 4px; background: #b0b0b0; }
.lo-side { flex: 1; border-left: 1px solid #aaa; padding-left: 5px; background: #f1f0ee; }
.lo-side svg { border-left: 1px solid #aaa; height: 80px; }

/* Firefox */
.firefox { left: 127px; top: 0; width: 1033px; height: 1056px; border: solid #777; border-width: 1px 1px 0; background: #f2f2f2; color: #444; font-size: 14px; letter-spacing: .2px; }
.ff-title { display: flex; align-items: center; height: 25px; flex: none; padding: 0 7px 0 7px; background: linear-gradient(#ececec, #dfdfdf); }
.ff-title h1, .vm-title h1 { font: bold 15px/23px "DejaVu Sans", sans-serif; letter-spacing: -.06px; color: #a8a8a8; margin-right: auto; white-space: nowrap; }
.ff-title h1 { padding-left: 90px; }
.ff-tabs { display: flex; align-items: center; flex: none; height: 30px; padding-left: 15px; border-bottom: 1px solid #9a9a9a; background: #dfdfdf; }
.tab { display: flex; align-items: center; width: 210px; height: 22px; padding: 0 10px 0 9px; border-right: 1px solid #b8b8b8; }
.tab span { width: 155px; margin: 1px auto 0 6px; overflow: hidden; white-space: nowrap; mask-image: linear-gradient(90deg, #000 125px, transparent 154px); }
.tab.last { border: 0; }
.tab.active { position: relative; height: 30px; border: 0; padding: 0 9px 0 8px; }
.tab.active > * { position: relative; }
.tab.active .shape { position: absolute; left: -14px; top: 1px; }
.plus { margin-left: 12px; }
.ff-nav { display: flex; align-items: center; flex: none; height: 43px; padding-left: 5px; }
.back { position: relative; z-index: 1; display: flex; align-items: center; justify-content: center; width: 32px; height: 32px; margin-right: -10px; border: 1px solid #b5b5b5; border-radius: 50%; background: #fafafa; }
.url { display: flex; align-items: center; width: 556px; height: 24px; padding: 0 10px 0 15px; border: 1px solid #b8b8b8; background: #fff; font-size: 14px; }
.lock { margin-left: 6px; }
.owner { margin-left: 5px; padding-right: 4px; border-right: 1px solid #aaa; line-height: 15px; font-size: 13px; letter-spacing: -.4px; color: #3a9a1e; white-space: nowrap; }
.addr { flex: 1; margin-left: 6px; overflow: hidden; white-space: nowrap; letter-spacing: .26px; color: #999; mask-image: linear-gradient(90deg, #000 315px, transparent 343px); }
.addr b { color: #222; font-weight: 400; }
.reload { box-sizing: content-box; border-left: 1px solid #bbb; padding-left: 10px; }
.search { display: flex; align-items: center; width: 183px; height: 24px; margin: 0 10px 0 6px; padding-left: 4px; border: 1px solid #b8b8b8; background: #fff; color: #909090; font-size: 14.500px; }
.search span { margin-left: 1px; }
.ff-marks { display: flex; align-items: center; flex: none; height: 32px; padding-bottom: 2px; border-bottom: 1px solid #b8b8b8; }
.ff-marks span { display: flex; align-items: center; gap: 6px; padding-left: 8px; white-space: nowrap; }
.m1 { width: 122px; } .m2 { width: 192px; letter-spacing: .25px; } .m3 { width: 169px; letter-spacing: .05px; } .m4 { width: 190px; letter-spacing: .3px; }
.ff-marks .m2, .ff-marks .m5 { gap: 7px; }
.ff-marks .m4 { gap: 7px; }
.ff-view { display: flex; flex: 1; min-height: 0; overflow: hidden; background: #fff; letter-spacing: 0; }
.ff-scroll { width: 10px; margin-left: auto; background: #e3e3e3; }
.markdown { width: 980px; height: 1100px; margin-left: 21px; padding: 6px 45px 0; border: solid #ddd; border-width: 0 1px; font: 16px/24px "Liberation Sans", sans-serif; letter-spacing: -.025px; color: #24292e; }
.markdown h2 { padding-bottom: 8px; margin-bottom: 16px; border-bottom: 1px solid #eaecef; font-size: 24px; line-height: 30px; letter-spacing: .09px; }
.markdown p, .markdown ul { margin-bottom: 16px; }
.markdown ul { padding-left: 32px; list-style: none; }
.markdown ul ul { margin: 0; }
.markdown li { position: relative; }
.markdown li::before { content: ""; position: absolute; left: -15px; top: 9px; width: 7px; height: 7px; border: 1px solid currentColor; border-radius: 50%; background: currentColor; }
.markdown li li::before { background: none; }
.markdown li + li { margin-top: 4px; }
.markdown code { padding: 3px 4.700px; border-radius: 3px; background: #f3f3f3; font: 13.600px "Liberation Mono", monospace; letter-spacing: -.14px; }
.markdown a { color: #0366d6; }
.markdown blockquote { margin: 0 0 16px; padding-left: 16px; border-left: 4px solid #dfe2e5; color: #6a737d; white-space: nowrap; }
.markdown blockquote ul { margin: 0; }

/* VirtualBox machine window */
.vm { left: 873px; top: 213px; width: 1045px; height: 843px; border: 1px solid #555; border-bottom: 0; background: #eeeae6; }
.vm-title { display: flex; align-items: center; flex: none; height: 25px; padding: 0 8px 0 6px; background: linear-gradient(#fff, #dcdcdc); }
.vm-title h1 { padding-left: 254px; color: #5c5c5c; }
.vm-title svg:last-child { margin-top: -1px; }
.vm-menu { display: flex; gap: 15px; flex: none; height: 19px; padding-left: 10px; font: 13px/18px "DejaVu Sans Condensed", sans-serif; letter-spacing: .2px; color: #1c1c1c; }
.guest { position: relative; display: flex; flex-direction: column; flex: none; width: 1040px; height: 772px; margin-left: 2px; background: #e8e8e6; font: 13px/20px Roboto, sans-serif; color: #2e3436; overflow: hidden; }
.cc-title { display: flex; align-items: center; justify-content: flex-end; flex: none; height: 25px; padding-right: 8px; border-top: 1px solid #8a8c84; background: #ededeb; }
.cc-body { display: grid; grid-template-columns: 200px 798px; gap: 24px; flex: 1; min-height: 0; padding: 9px 0 32px 9px; border-bottom: 1px solid #fff; }
.cc-left { background: #fff; border-left: 1px solid #999; }
.cc-right { display: flex; min-height: 0; border: 1px solid #999; border-width: 1px 0 0 1px; background: #fff; }
.cc-list { flex: 1; overflow: hidden; color: #111; }
.cc-list hr { height: 1px; margin: 0; border: 0; background: linear-gradient(90deg, #aaa 70%, #fff); }
.cc-list .r1 { margin-top: 163px; }
.cc-list .r2 { margin-top: 286px; }
.mods { display: grid; grid-template-columns: 335px 1fr; grid-auto-rows: 42px; row-gap: 10px; margin-top: 158px; padding-left: 3px; }
.mods span { display: flex; align-items: center; gap: 1px; white-space: nowrap; }
.cc-scroll { width: 14px; padding: 112px 3px 0 4px; border-left: 1px solid #999; border-right: 1px solid #fff; background: #c3c5c5; }
.cc-scroll i { display: block; height: 290px; border-radius: 3px; background: #7b7f7f; }
.panel { display: flex; align-items: center; flex: none; height: 25px; padding-left: 8px; color: #3a3f40; letter-spacing: .15px; }
.p-start { margin-left: 5px; width: 72px; font-size: 13.500px; }
.p-folder { margin-right: 2px; }
.p-task { display: flex; align-items: center; width: 198px; height: 22px; margin-right: 2px; padding-left: 6px; border: 1px solid #999; border-radius: 3px; background: linear-gradient(#ededeb, #d6d6d2); white-space: nowrap; letter-spacing: .02px; }
.p-task span { margin-left: 8px; }
.p-task.pressed { background: #cdcdc9; letter-spacing: .1px; }
.p-tray { margin-left: 248px; }
.p-clock { margin-left: 15px; width: 57px; letter-spacing: .3px; }
.vm-status { display: flex; align-items: center; flex: 1; justify-content: flex-end; padding-right: 25px; font-size: 13.300px; letter-spacing: -.2px; color: #1c1c1c; }
.vm-status span { margin-left: 5px; width: 75px; white-space: nowrap; }

/* YaST dialog */
.dialog { position: absolute; left: 1px; top: 0; display: flex; flex-direction: column; width: 805px; height: 628px; border: 1px solid #555850; border-bottom-width: 2px; border-radius: 6px 6px 0 0; background: #e8e8e6; box-shadow: 3px 4px 16px rgba(0,0,0,.4); overflow: hidden; }
.dg-title { display: flex; align-items: center; flex: none; height: 23px; padding: 0 9px 0 5px; background: linear-gradient(#898b84, #9c9e96); }
.dg-title h2 { margin: 0 auto; padding-right: 4px; font-size: 13px; font-weight: 700; letter-spacing: .42px; color: #fff; text-shadow: 0 1px 1px #555; }
.dg-head { margin: 14px 0 0 27px; }
.dg-tabs { display: flex; align-items: flex-end; height: 31px; margin: 4px 15px 0 14px; background: linear-gradient(#aaa, #aaa) bottom / 100% 1px no-repeat; }
.dg-tabs span { width: 155px; height: 28px; padding-right: 2px; border: 1px solid #a0a09c; border-right: 0; border-radius: 3px 0 0 0; background: #f1f1f0; text-align: center; line-height: 28px; }
.dg-tabs .cur { width: 154px; height: 31px; border: 1px solid #a0a09c; border-bottom: 0; border-radius: 3px 3px 0 0; background: #fff; line-height: 31px; }
.dg-form { display: grid; grid-template-columns: 585px 87px; grid-template-rows: 23px 28px 32px 28px; column-gap: 10px; margin: 71px 0 0 60px; }
.dg-form .low { padding-top: 9px; }
.dg-form .dev { position: relative; top: 1px; }
.field { margin-left: 1px; padding-left: 2px; border: 1px solid #a0a09c; border-radius: 3px; background: #fff; box-shadow: inset 0 1px 1px #ddd; line-height: 28px; color: #000; }
.select { display: flex; height: 26px; margin-top: 1px; border: 1px solid #a0a09c; border-radius: 3px; background: #fff; line-height: 25px; color: #000; }
.select span { flex: 1; padding-left: 2px; }
.select i { display: flex; align-items: center; justify-content: center; width: 31px; background: linear-gradient(#eee, #cfcfcd); }
.dialog h3 { margin: 26px 0 0 56px; font-size: 13px; font-weight: 700; letter-spacing: -.04px; }
.dg-table { width: 674px; height: 91px; margin: -2px 0 0 68px; border: solid #999; border-width: 1px 0 0 1px; background: #fff; }
.cols { display: flex; height: 26px; border-right: 1px solid #fff; background: #e8e8e6; }
.cols span { border: solid #e2e2e2; border-width: 0 1px 1px 0; padding-left: 4px; background: #fff; line-height: 27px; }
.cols .c1 { display: flex; align-items: center; justify-content: space-between; width: 83px; padding-right: 9px; }
.cols .c2 { width: 90px; padding-left: 4.500px; } .c3 { width: 94px; } .c4 { width: 103px; } .cols .c5 { width: 92px; border-right: 0; }
button { width: 83px; height: 26px; padding: 2px 0 0; border: 1px solid #90908c; border-radius: 3px; background: linear-gradient(#ececea, #cfcfcd); font: 13px Roboto, sans-serif; color: #2e3436; }
button:disabled { background: #f1f1f0; border-color: #a5a5a1; color: #8b8e8f; }
.dg-actions { display: flex; gap: 8px; margin: 7px 0 0 272px; }
.dg-checks { display: flex; flex-direction: column; margin: 26px 0 0 58px; }
.dg-checks label { display: flex; align-items: center; gap: 7px; height: 23px; }
.dg-checks i { width: 15px; height: 16px; margin-top: -2px; border: 1px solid #999; border-radius: 3px; background: linear-gradient(#fff, #e2e2e2); }
.dg-foot { display: flex; gap: 16px; margin: 71px 16px 0 15px; }
.cancel { margin-left: auto; }

/* LXDE panel */
.taskbar { position: absolute; left: 0; top: 1056px; display: flex; align-items: center; width: 1920px; height: 24px; border-bottom: 1px solid #888; background: linear-gradient(#ececec, #bcbcbc); font-size: 15px; color: #111; }
.menu-btn { display: flex; align-items: center; justify-content: center; width: 48px; height: 24px; background: linear-gradient(#86b4dd, #2a6398); }
.quick { margin-left: 7px; }
.task { display: flex; align-items: center; height: 24px; white-space: nowrap; }
.task span { margin-left: 3px; }
.t1 { margin-left: 8px; width: 153px; } .t2 { width: 151px; } .t3 { width: 150px; } .t4 { width: 149px; }
.t5 { width: 144px; background: linear-gradient(#a8a8a8, #7d7d7d); color: #f0f0f0; }
.t5 span { margin-left: 0; }
.tray { margin-left: auto; }
.clock { margin: 0 8px 0 10px; letter-spacing: -.7px; font-size: 15px; color: #222; }
.taskbar > svg:last-child { margin-right: 3px; }
```
